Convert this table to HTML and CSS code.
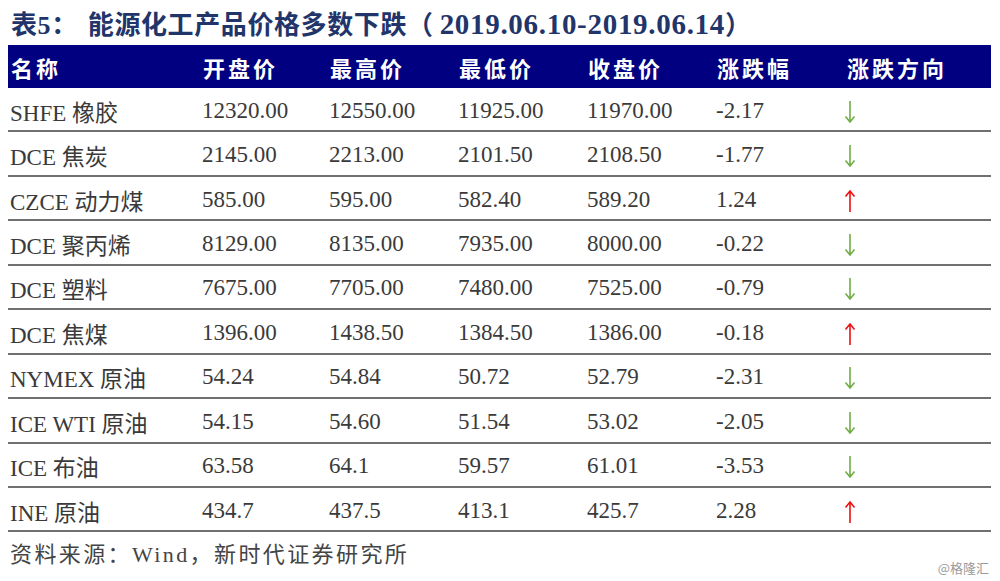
FILE: index.html
```html
<!DOCTYPE html>
<html lang="zh">
<head>
<meta charset="utf-8">
<link rel="stylesheet" href="styles.css">
</head>
<body>
<div class="page">
  <h1 class="title"><span class="tno">表5：</span><span>能源化工产品价格多数下跌（<span class="date">2019.06.10-2019.06.14</span>）</span></h1>
  <div class="table">
    <div class="row head">
      <div>名称</div><div>开盘价</div><div>最高价</div><div>最低价</div><div>收盘价</div><div>涨跌幅</div><div>涨跌方向</div>
    </div>
    <div class="row"><div>SHFE 橡胶</div><div>12320.00</div><div>12550.00</div><div>11925.00</div><div>11970.00</div><div>-2.17</div><div class="dir"><svg class="down" viewBox="0 0 12 24"><path d="M6 1V22M1.5 16.5L6 22L10.5 16.5"/></svg></div></div>
    <div class="row"><div>DCE 焦炭</div><div>2145.00</div><div>2213.00</div><div>2101.50</div><div>2108.50</div><div>-1.77</div><div class="dir"><svg class="down" viewBox="0 0 12 24"><path d="M6 1V22M1.5 16.5L6 22L10.5 16.5"/></svg></div></div>
    <div class="row"><div>CZCE 动力煤</div><div>585.00</div><div>595.00</div><div>582.40</div><div>589.20</div><div>1.24</div><div class="dir"><svg class="up" viewBox="0 0 12 24"><path d="M6 23V2M1.5 7.5L6 2L10.5 7.5"/></svg></div></div>
    <div class="row"><div>DCE 聚丙烯</div><div>8129.00</div><div>8135.00</div><div>7935.00</div><div>8000.00</div><div>-0.22</div><div class="dir"><svg class="down" viewBox="0 0 12 24"><path d="M6 1V22M1.5 16.5L6 22L10.5 16.5"/></svg></div></div>
    <div class="row"><div>DCE 塑料</div><div>7675.00</div><div>7705.00</div><div>7480.00</div><div>7525.00</div><div>-0.79</div><div class="dir"><svg class="down" viewBox="0 0 12 24"><path d="M6 1V22M1.5 16.5L6 22L10.5 16.5"/></svg></div></div>
    <div class="row"><div>DCE 焦煤</div><div>1396.00</div><div>1438.50</div><div>1384.50</div><div>1386.00</div><div>-0.18</div><div class="dir"><svg class="up" viewBox="0 0 12 24"><path d="M6 23V2M1.5 7.5L6 2L10.5 7.5"/></svg></div></div>
    <div class="row"><div>NYMEX 原油</div><div>54.24</div><div>54.84</div><div>50.72</div><div>52.79</div><div>-2.31</div><div class="dir"><svg class="down" viewBox="0 0 12 24"><path d="M6 1V22M1.5 16.5L6 22L10.5 16.5"/></svg></div></div>
    <div class="row"><div>ICE WTI 原油</div><div>54.15</div><div>54.60</div><div>51.54</div><div>53.02</div><div>-2.05</div><div class="dir"><svg class="down" viewBox="0 0 12 24"><path d="M6 1V22M1.5 16.5L6 22L10.5 16.5"/></svg></div></div>
    <div class="row"><div>ICE 布油</div><div>63.58</div><div>64.1</div><div>59.57</div><div>61.01</div><div>-3.53</div><div class="dir"><svg class="down" viewBox="0 0 12 24"><path d="M6 1V22M1.5 16.5L6 22L10.5 16.5"/></svg></div></div>
    <div class="row"><div>INE 原油</div><div>434.7</div><div>437.5</div><div>413.1</div><div>425.7</div><div>2.28</div><div class="dir"><svg class="up" viewBox="0 0 12 24"><path d="M6 23V2M1.5 7.5L6 2L10.5 7.5"/></svg></div></div>
  </div>
  <div class="foot">
    <div class="source">资料来源：Wind，新时代证券研究所</div>
    <div class="mark">@格隆汇</div>
  </div>
</div>
</body>
</html>
```

FILE: styles.css
```css
* { box-sizing: border-box; }
html, body { margin: 0; padding: 0; background: #fff; }
body {
  font-family: "Liberation Serif", "Noto Sans CJK SC", serif;
  width: 1000px;
  height: 581px;
  overflow: hidden;
}
.page { padding: 0 9px 0 8px; }
.title {
  margin: 0;
  height: 45px;
  padding: 7px 0 0 3px;
  font-size: 26px;
  font-weight: bold;
  color: #22356a;
  line-height: 34px;
  white-space: nowrap;
  letter-spacing: 0.6px;
}
.title .tno { margin-right: 10px; }
.title .date { font-size: 29px; letter-spacing: 0.7px; margin-left: 6px; }
.table { width: 983px; }
.row {
  display: grid;
  grid-template-columns: 192px 127px 129px 129px 129px 130px 147px;
  align-items: center;
  height: 44.44px;
  border-bottom: 2px solid #707070;
  font-size: 23px;
  color: #3a3a3a;
  white-space: nowrap;
}
.row > div { padding: 3px 0 0 2px; }
.row.head {
  height: 43px;
  background: #000080;
  color: #fff;
  font-weight: bold;
  font-size: 22px;
  border-bottom: none;
  letter-spacing: 3px;
}
.row.head > div { padding: 0 0 0 3px; }
.dir { display: flex; align-items: center; }
.row > .dir { padding-left: 0; }
.dir svg {
  width: 12px;
  height: 24px;
  fill: none;
  stroke-width: 1.6;
  margin-top: 2px;
}
.dir .down { stroke: #70ad47; }
.dir .up { stroke: #ee1111; }
.foot {
  position: relative;
  height: 48px;
}
.source {
  padding: 4px 0 0 2px;
  font-size: 22px;
  color: #444;
  letter-spacing: 2.4px;
}
.mark {
  position: absolute;
  right: 2px;
  top: 26px;
  font-family: "Noto Sans CJK SC", "Liberation Sans", sans-serif;
  font-size: 13px;
  color: #9a9a9a;
}
```
